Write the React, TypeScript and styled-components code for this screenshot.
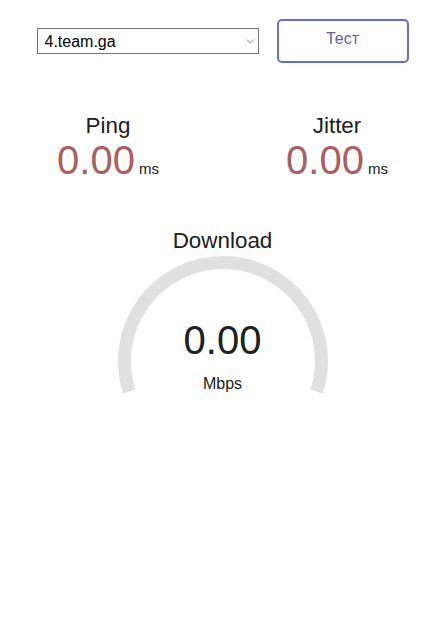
import React from 'react';
import styled, { createGlobalStyle } from 'styled-components';
import { ChevronDown } from 'lucide-react';

const GlobalStyle = createGlobalStyle`
  html, body {
    margin: 0;
    padding: 0;
    background: #ffffff;
  }
  body {
    font-family: "Liberation Sans", Arial, sans-serif;
    color: #202020;
  }
`;

const Page = styled.div`
  width: 443px;
  min-height: 619px;
  box-sizing: border-box;
  padding-left: 2px;
  display: flex;
  flex-direction: column;
  align-items: center;
`;

const Toolbar = styled.div`
  display: flex;
  align-items: center;
  gap: 18px;
  padding-top: 19px;
`;

const SelectWrap = styled.div`
  position: relative;
  width: 222px;
  height: 26px;
`;

const ServerSelect = styled.select`
  appearance: none;
  width: 100%;
  height: 100%;
  box-sizing: border-box;
  border: 1px solid #767676;
  border-radius: 0;
  background: #ffffff;
  padding: 0 24px 0 7px;
  font-family: "Liberation Sans", Arial, sans-serif;
  font-size: 16px;
  color: #000000;
  outline: none;
`;

const Chevron = styled(ChevronDown)`
  position: absolute;
  right: 2px;
  top: 7px;
  pointer-events: none;
  color: #666666;
`;

const StartButton = styled.button`
  width: 132px;
  height: 44px;
  box-sizing: border-box;
  border: 2px solid #6a6ad4;
  border-radius: 5px;
  background: #ffffff;
  color: #6060aa;
  font-family: "Liberation Sans", Arial, sans-serif;
  font-size: 16px;
  padding: 0 0 4px;
  cursor: pointer;
`;

const Metrics = styled.div`
  display: grid;
  grid-template-columns: 200px 200px;
  column-gap: 29px;
  margin-top: 50px;
`;

const Metric = styled.div`
  display: flex;
  flex-direction: column;
  align-items: center;
`;

const TestName = styled.div`
  font-size: 22.4px;
  color: #202020;
`;

const ValueLine = styled.div`
  display: flex;
  align-items: baseline;
  gap: 4px;
  margin-top: -1px;
`;

const Value = styled.span<{ $color?: string }>`
  font-size: 40px;
  color: ${(p) => p.$color || '#202020'};
`;

const Unit = styled.span`
  font-size: 15px;
  color: #202020;
`;

const Download = styled.div`
  display: flex;
  flex-direction: column;
  align-items: center;
  margin-top: 45px;
`;

const Gauge = styled.div`
  display: grid;
  width: 220px;
  height: 150px;
  margin-top: -2px;
  > * {
    grid-area: 1 / 1;
  }
`;

const GaugeText = styled.div`
  display: flex;
  flex-direction: column;
  align-items: center;
  padding-top: 66px;
`;

const GaugeUnit = styled.div`
  font-size: 16px;
  color: #202020;
  margin-top: 12px;
`;

const R = 98.5;
const CX = 110;
const CY = 109;

function arcPath(): string {
  const a0 = (-198 * Math.PI) / 180;
  const a1 = (18 * Math.PI) / 180;
  const x0 = CX + R * Math.cos(a0);
  const y0 = CY + R * Math.sin(a0);
  const x1 = CX + R * Math.cos(a1);
  const y1 = CY + R * Math.sin(a1);
  return `M ${x0} ${y0} A ${R} ${R} 0 1 1 ${x1} ${y1}`;
}

export default function App() {
  return (
    <Page>
      <GlobalStyle />
      <Toolbar>
        <SelectWrap>
          <ServerSelect defaultValue="4.team.ga">
            <option value="4.team.ga">4.team.ga</option>
          </ServerSelect>
          <Chevron size={13} strokeWidth={1.5} />
        </SelectWrap>
        <StartButton>Тест</StartButton>
      </Toolbar>
      <Metrics>
        <Metric>
          <TestName>Ping</TestName>
          <ValueLine>
            <Value $color="#aa6060">0.00</Value>
            <Unit>ms</Unit>
          </ValueLine>
        </Metric>
        <Metric>
          <TestName>Jitter</TestName>
          <ValueLine>
            <Value $color="#aa6060">0.00</Value>
            <Unit>ms</Unit>
          </ValueLine>
        </Metric>
      </Metrics>
      <Download>
        <TestName>Download</TestName>
        <Gauge>
          <svg width="220" height="150" viewBox="0 0 220 150">
            <path d={arcPath()} fill="none" stroke="#e0e0e0" strokeWidth={13} />
          </svg>
          <GaugeText>
            <Value>0.00</Value>
            <GaugeUnit>Mbps</GaugeUnit>
          </GaugeText>
        </Gauge>
      </Download>
    </Page>
  );
}
